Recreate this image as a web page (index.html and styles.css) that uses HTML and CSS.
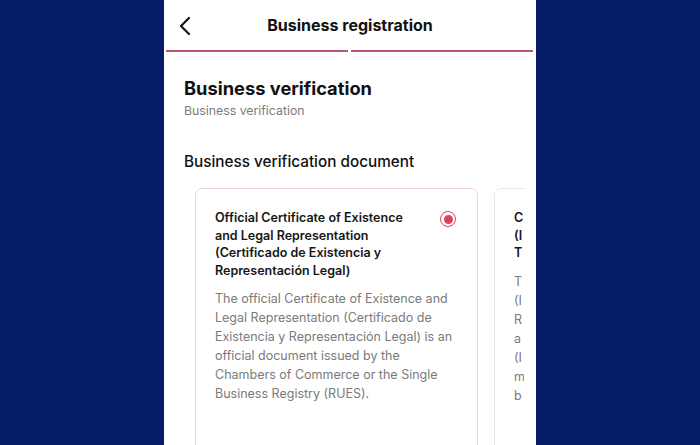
FILE: index.html
```html
<!DOCTYPE html>
<html lang="en">
<head>
    <meta charset="UTF-8">
    <meta name="viewport" content="width=device-width, initial-scale=1.0">
    <title>Business registration</title>
    <link rel="stylesheet" href="styles.css">
</head>
<body>
    <div class="phone">
        <div class="topbar">
            <button class="back" aria-label="Back">
                <svg width="14" height="20" viewBox="0 0 14 20"><path d="M11 2 L3 10 L11 18" fill="none" stroke="#111" stroke-width="2.2" stroke-linecap="round" stroke-linejoin="round"/></svg>
            </button>
            <div class="title">Business registration</div>
        </div>
        <div class="progress">
            <span class="step done"></span>
            <span class="step done"></span>
        </div>

        <div class="content">
            <h1>Business verification</h1>
            <p class="sub">Business verification</p>
            <h2>Business verification document</h2>
        </div>

        <!-- document options, scrolls sideways -->
        <div class="cards">
            <div class="card selected">
                <div class="card-head">
                    <div class="card-title">Official Certificate of Existence and Legal Representation (Certificado de Existencia y Representación Legal)</div>
                    <span class="radio on"></span>
                </div>
                <p class="card-text">The official Certificate of Existence and Legal Representation (Certificado de Existencia y Representación Legal) is an official document issued by the Chambers of Commerce or the Single Business Registry (RUES).</p>
            </div>
            <div class="card">
                <div class="card-head">
                    <div class="card-title">C<br>(I<br>T</div>
                    <span class="radio"></span>
                </div>
                <p class="card-text">T<br>(I<br>R<br>a<br>(I<br>m<br>b</p>
            </div>
        </div>
    </div>
</body>
</html>
```

FILE: styles.css
```css
body {
    margin: 0;
    background-color: #071c66;
    font-family: Inter, "Noto Sans", Arial, sans-serif;
    overflow: hidden;
}

.phone {
    width: 372px;
    height: 445px;
    margin-left: 164px;
    background-color: white;
    overflow: hidden;
}

.topbar {
    height: 50px;
    display: flex;
    align-items: center;
    justify-content: center;
    position: relative;
}

.back {
    position: absolute;
    left: 14px;
    top: 16px;
    border: none;
    background: none;
    padding: 0;
    width: 14px;
    height: 20px;
}

.title {
    font-size: 16px;
    font-weight: 700;
    color: #111;
    margin-top: -1px;
}

.progress {
    display: flex;
    gap: 3px;
    padding: 0 3px 0 2px;
}

.step {
    flex: 1;
    height: 2px;
    background-color: #eee;
}

.step.done {
    background-color: #b6586f; /* muted pink */
}

.content {
    padding: 0 20px;
}

h1 {
    font-size: 18.3px;
    font-weight: 700;
    color: #111;
    margin: 24px 0 0;
    line-height: 24px;
}

.sub {
    font-size: 12.3px;
    color: #7c7c7c;
    margin: 2px 0 0;
    line-height: 18px;
}

h2 {
    font-size: 15.3px;
    font-weight: 500;
    color: #111;
    margin: 32px 0 0;
    line-height: 20px;
}

.cards {
    display: flex;
    gap: 16px;
    padding-left: 31px;
    margin-top: 16px;
    margin-right: 12px;
    overflow: hidden;
}

.card {
    flex: 0 0 283px;
    box-sizing: border-box;
    height: 280px;
    border: 1px solid #e8e8e8;
    border-radius: 7px;
    padding: 20px 20px 0 19px;
}

.card.selected {
    border-color: #efd3d9;
}

.card-head {
    display: flex;
    justify-content: space-between;
    align-items: flex-start;
}

.card-title {
    width: 200px;
    font-size: 12.5px;
    font-weight: 600;
    color: #161616;
    line-height: 17.5px;
}

.radio {
    width: 14px;
    height: 14px;
    border: 1.5px solid #ccc;
    border-radius: 50%;
    margin-top: 2px;
    margin-right: 1px;
    flex-shrink: 0;
    box-sizing: content-box;
    position: relative;
}

.radio.on {
    border-color: #e0415a;
}

.radio.on::after {
    content: "";
    position: absolute;
    left: 2.5px;
    top: 2.5px;
    width: 9px;
    height: 9px;
    border-radius: 50%;
    background-color: #e0415a;
}

.card-text {
    font-size: 12.5px;
    color: #7a7a7a;
    line-height: 19px;
    margin: 10px 0 0;
}
```
